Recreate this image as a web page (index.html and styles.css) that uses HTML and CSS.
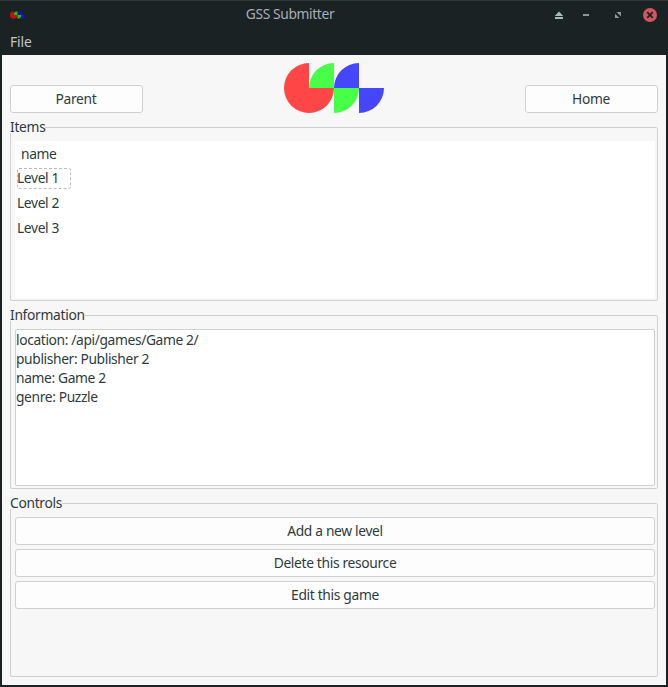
FILE: index.html
```html
<!DOCTYPE html>
<html lang="en">
<head>
<meta charset="utf-8">
<title>GSS Submitter</title>
<link rel="stylesheet" href="styles.css">
</head>
<body>
<div class="window">
  <header class="titlebar">
    <svg class="app-icon" width="15" height="8" viewBox="0 0 100 50">
      <path fill="#c90d0d" d="M25 0A25 25 0 1 0 50 25H25Z"/>
      <path fill="#16c816" d="M50 0V25H25A25 25 0 0 1 50 0ZM50 25H75A25 25 0 0 1 50 50Z"/>
      <path fill="#1010e0" d="M75 0V25H50A25 25 0 0 1 75 0ZM75 25H100A25 25 0 0 1 75 50Z"/>
    </svg>
    <h1 class="title">GSS Submitter</h1>
    <svg class="window-controls" width="108" height="16" viewBox="550 6 108 16">
      <path fill="#a9bcbc" d="M559 10.5L563.2 15H554.8ZM555 16H563V18H555Z"/>
      <path fill="#8c9899" d="M583 13H589V15H583Z"/>
      <path fill="#8c9899" d="M616.5 11H621V15.5L619.3 13.8ZM615 12.7L619.3 17H615Z"/>
      <circle cx="650" cy="14" r="7" fill="#d0565f"/>
      <path stroke="#1b2224" stroke-width="1.8" d="M647.2 11.2L652.8 16.8M652.8 11.2L647.2 16.8"/>
    </svg>
  </header>
  <nav class="menubar"><span>File</span></nav>
  <main class="content">
    <div class="toolbar">
      <button class="button nav-button">Parent</button>
      <svg class="logo" width="100" height="50" viewBox="0 0 100 50">
        <path fill="#ff4646" d="M25 0A25 25 0 1 0 50 25H25Z"/>
        <path fill="#46ff46" d="M50 0V25H25A25 25 0 0 1 50 0ZM50 25H75A25 25 0 0 1 50 50Z"/>
        <path fill="#4646ff" d="M75 0V25H50A25 25 0 0 1 75 0ZM75 25H100A25 25 0 0 1 75 50Z"/>
      </svg>
      <button class="button nav-button">Home</button>
    </div>
    <section class="group">
      <h2 class="group-title">Items</h2>
      <div class="list">
        <div class="list-header">name</div>
        <div class="list-row"><span class="cell focused">Level 1</span></div>
        <div class="list-row"><span class="cell">Level 2</span></div>
        <div class="list-row"><span class="cell">Level 3</span></div>
      </div>
    </section>
    <section class="group">
      <h2 class="group-title">Information</h2>
      <div class="info">
        <div>location: /api/games/Game 2/</div>
        <div>publisher: Publisher 2</div>
        <div>name: Game 2</div>
        <div>genre: Puzzle</div>
      </div>
    </section>
    <section class="group">
      <h2 class="group-title">Controls</h2>
      <div class="controls">
        <button class="button">Add a new level</button>
        <button class="button">Delete this resource</button>
        <button class="button">Edit this game</button>
      </div>
    </section>
  </main>
</div>
</body>
</html>
```
FILE: styles.css
```css
* { box-sizing: border-box; }
body {
  margin: 0;
  font: 13.8px/19px "Noto Sans", sans-serif;
  letter-spacing: -0.37px;
  color: #2f3a3d;
}
h1, h2 { margin: 0; font-size: inherit; font-weight: 400; }
svg { display: block; }
.window {
  width: 668px;
  height: 687px;
  padding: 0 2px 2px;
  background: #1b2224;
  border-top: 1px solid #2e3a3c;
}
.titlebar {
  display: grid;
  grid-template-columns: 100px 1fr 188px;
  align-items: center;
  height: 27px;
  padding: 0 8px;
}
.title { padding-bottom: 2px; text-align: center; color: #a6afb8; }
.window-controls { justify-self: end; }
.menubar { height: 27px; padding: 4px 8px 0; color: #c3c6c6; letter-spacing: -0.1px; }
.content {
  display: flex;
  flex-direction: column;
  gap: 14px;
  height: 630px;
  padding: 8px;
  background: #f7f7f7;
}
.toolbar {
  display: flex;
  justify-content: space-between;
  align-items: flex-end;
  height: 50px;
}
.button {
  display: block;
  height: 28px;
  padding: 0 0 2px;
  border: 1px solid #cfd1d1;
  border-radius: 3px;
  background: #fdfdfd;
  font: inherit;
  letter-spacing: -0.33px;
  color: inherit;
}
.nav-button { width: 133px; }
.nav-button { padding-right: 1px; }
.group {
  height: 174px;
  padding: 0 2px 0 4px;
  border: 1px solid #cfd1d1;
  border-radius: 2px;
}
.group-title {
  width: max-content;
  height: 16px;
  margin: -11px 0 8px -5px;
  background: #f7f7f7;
  letter-spacing: -0.3px;
}
.list { width: 640px; height: 157px; padding-top: 3px; background: #fff; }
.list-header { height: 22px; padding-left: 6px; }
.list-row { height: 25px; padding: 2px 0 0 2px; }
.cell {
  display: block;
  width: 54px;
  height: 21px;
  border: 1px dashed transparent;
  border-radius: 2px;
  line-height: 17px;
  text-indent: -1px;
}
.focused { border-color: #b8bcbc; }
.info {
  height: 157px;
  border: 1px solid #cfd1d1;
  border-radius: 2px;
  background: #fff;
}
.group .info, .controls { width: 640px; }
.controls { display: grid; gap: 4px; }
```
